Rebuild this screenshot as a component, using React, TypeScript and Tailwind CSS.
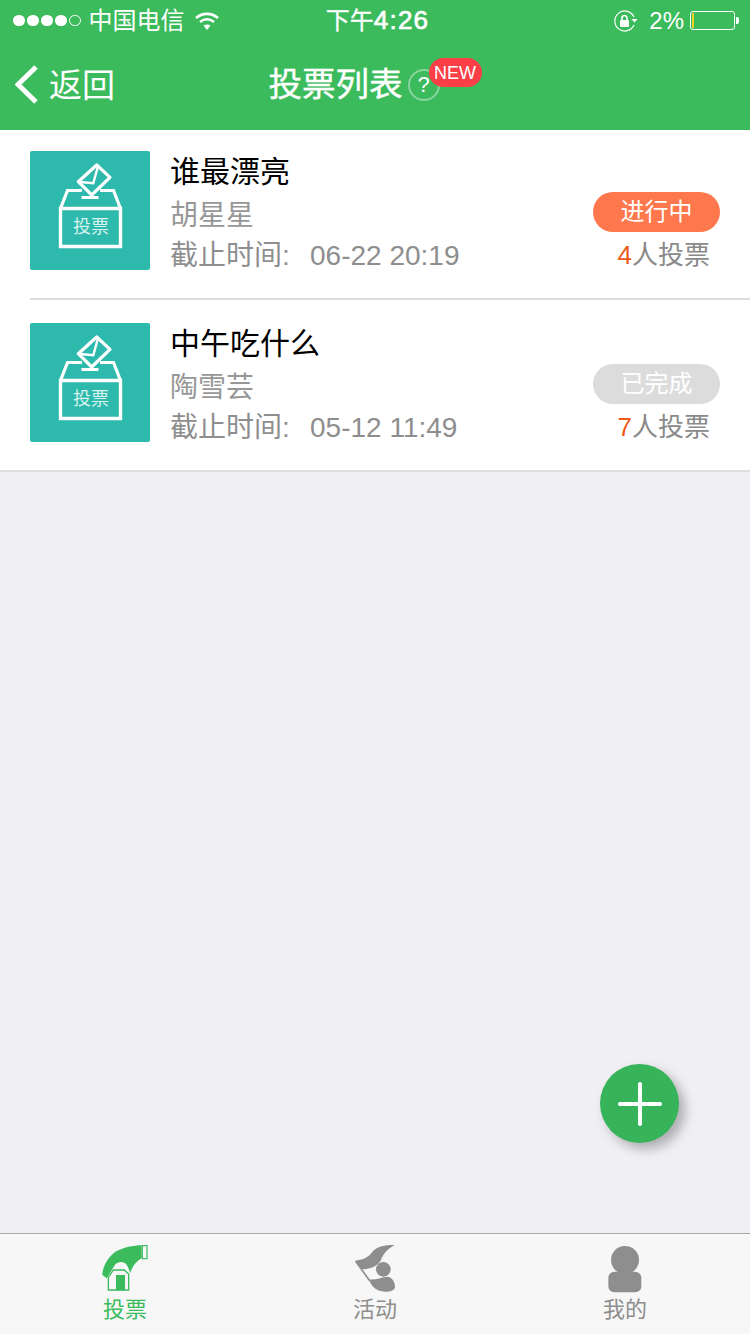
const FONT = "font-['Liberation_Sans','Noto_Sans_CJK_SC',sans-serif]";

function BallotIcon() {
  return (
    <div className="w-[120px] h-[119px] shrink-0 bg-[#2DB9AB] rounded-[2px]">
      <svg width="120" height="119" viewBox="0 0 120 119" fill="none" stroke="#fff">
        <path d="M30.5 57.5V95.5H90.5V57.5Z" strokeWidth="3.4" />
        <path d="M30.5 57.5L37.5 39.5H52M70 39.5H83.5L90.5 57.5" strokeWidth="3.2" />
        <path d="M51.5 46.5H68.5" strokeWidth="3" />
        <path d="M66.7 14L80 26.3L61.7 44L48.3 30.7Z" strokeWidth="3.2" strokeLinejoin="round" />
        <path d="M50 31L63.3 32.3L67.7 16.3" strokeWidth="2.4" />
        <text x="61" y="82" textAnchor="middle" fill="#D8F3F0" stroke="none" fontSize="18" fontFamily="'Noto Sans CJK SC',sans-serif">投票</text>
      </svg>
    </div>
  );
}

function Row({ title, name, date, status, count, statusClass, rowClass, lineClass }: { title: string; name: string; date: string; status: string; count: string; statusClass: string; rowClass: string; lineClass: string }) {
  return (
    <div className={`flex ${rowClass}`}>
      <div className={`flex flex-1 pr-[30px] ${lineClass}`}>
        <BallotIcon />
        <div className="ml-[20px] flex-1 flex flex-col">
          <div className="h-[42px] leading-[42px] text-[30px] text-black">{title}</div>
          <div className="mt-[2px] h-[42px] leading-[42px] text-[28px] text-[#979797]">{name}</div>
          <div className="h-[38px] leading-[38px] text-[28px] text-[#8E8E8E] whitespace-nowrap flex">
            <span>截止时间</span>
            <span className="w-[28px]">:</span>
            <span>{date}</span>
          </div>
        </div>
        <div className="flex flex-col items-end pt-[41px]">
          <div className={`w-[127px] h-[40px] rounded-full flex items-center justify-center text-[24px] text-white ${statusClass}`}>{status}</div>
          <div className="mt-[2px] mr-[10px] h-[42px] leading-[42px] text-[26px] text-[#8A8A8A] whitespace-nowrap">
            <span className="text-[#EE5A1C]">{count}</span>人投票
          </div>
        </div>
      </div>
    </div>
  );
}

function Tab({ label, active, children }: { label: string; active?: boolean; children: React.ReactNode }) {
  return (
    <div className={`flex-1 flex flex-col items-center pt-[6px] ${active ? "text-[#3BBB5C]" : "text-[#8E8E8E]"}`}>
      <div className="h-[55px] flex items-start">{children}</div>
      <div className="text-[22px] leading-[30px]">{label}</div>
    </div>
  );
}

export default function App() {
  return (
    <div className={`relative w-[750px] h-[1334px] overflow-hidden flex flex-col bg-[#EFEFF4] ${FONT}`}>
      <header className="relative z-10 h-[130px] shrink-0 bg-[#3BBB5C] text-white flex flex-col">
        <div className="h-[40px] grid grid-cols-3 items-center pl-[13px] pr-[11px]">
          <div className="flex items-center whitespace-nowrap">
            <div className="flex gap-[2.5px] items-center">
              <span className="w-[11.5px] h-[11.5px] rounded-full bg-white" />
              <span className="w-[11.5px] h-[11.5px] rounded-full bg-white" />
              <span className="w-[11.5px] h-[11.5px] rounded-full bg-white" />
              <span className="w-[11.5px] h-[11.5px] rounded-full bg-white" />
              <span className="w-[11.5px] h-[11.5px] rounded-full border border-white" />
            </div>
            <span className="ml-[8px] text-[24px] leading-[40px] pt-[1px]">中国电信</span>
            <svg className="ml-[9px]" width="26" height="20" viewBox="0 0 26 20" fill="none" stroke="#fff" strokeWidth="2.6">
              <path d="M2 7C8.5 1.5 17.5 1.5 24 7" />
              <path d="M6 11C10.5 7.5 15.5 7.5 20 11" />
              <path d="M13 19L9.5 14.5C11.5 13 14.5 13 16.5 14.5Z" fill="#fff" stroke="none" />
            </svg>
          </div>
          <div className="flex justify-center items-baseline whitespace-nowrap">
            <span className="text-[24px] ml-[3px] [-webkit-text-stroke:0.3px_white]">下午</span>
            <span className="text-[26px] tracking-[1.2px] [-webkit-text-stroke:0.7px_white]">4:26</span>
          </div>
          <div className="flex items-center justify-end whitespace-nowrap">
            <svg className="mr-[-2px]" width="24" height="22" viewBox="0 0 24 22" fill="none" stroke="#fff">
              <path d="M20 15A10 10 0 1 1 20 7" strokeWidth="1.2" />
              <path d="M17.5 9H23.5L20.5 12.5Z" fill="#fff" stroke="none" />
              <rect x="6" y="10" width="9" height="7" rx="1" fill="#fff" stroke="none" />
              <path d="M8 10V8A2.5 2.5 0 0 1 13 8V10" strokeWidth="1.6" />
            </svg>
            <span className="ml-[13px] text-[24px] leading-[40px] pt-[1px]">2%</span>
            <div className="ml-[6px] w-[45px] h-[19px] border border-white rounded-[3px] flex items-center pl-[1px]">
              <span className="w-[1.5px] h-[15px] bg-[#F0D020]" />
            </div>
            <span className="ml-[1px] w-[3px] h-[7px] bg-white rounded-r-[2px]" />
          </div>
        </div>
        <div className="relative flex-1 flex items-center justify-center">
          <div className="absolute left-[15px] top-[7px] h-[76px] flex items-center">
            <svg width="24" height="40" viewBox="0 0 24 40" fill="none" stroke="#fff" strokeWidth="5">
              <path d="M21 2L3 19.5L21 37" />
            </svg>
            <span className="ml-[10px] text-[33px] leading-none">返回</span>
          </div>
          <div className="flex items-center">
            <span className="text-[33.5px] leading-none [-webkit-text-stroke:0.4px_white]">投票列表</span>
            <span className="ml-[5px] w-[32px] h-[32px] rounded-full border-2 border-white/40 flex items-center justify-center text-[22px] leading-none">?</span>
            <span className="ml-[-11px] mt-[-25px] w-[53px] h-[29px] rounded-full bg-[#FC3E47] flex items-center justify-center text-[18px] leading-none">NEW</span>
          </div>
        </div>
      </header>

      <main className="flex-1 flex flex-col">
        <div className="bg-white">
          <Row rowClass="pl-[30px] pt-[21px] h-[170px]" lineClass="border-b-2 border-[#DEDEDE]" title="谁最漂亮" name="胡星星" date="06-22 20:19" status="进行中" count="4" statusClass="bg-[#FF774C]" />
          <Row rowClass="pl-[30px] pt-[23px] h-[172px] border-b-2 border-[#DEDEDE]" lineClass="" title="中午吃什么" name="陶雪芸" date="05-12 11:49" status="已完成" count="7" statusClass="bg-[#DCDCDC]" />
        </div>
      </main>

      <button className="absolute left-[600px] top-[1064px] w-[79px] h-[79px] rounded-full bg-[#37B35A] shadow-[6px_6px_12px_rgba(0,0,0,0.28)] flex items-center justify-center">
        <svg width="44" height="44" viewBox="0 0 44 44" stroke="#fff" strokeWidth="4" strokeLinecap="round">
          <path d="M22 2V42M2 22H42" />
        </svg>
      </button>

      <nav className="h-[101px] shrink-0 bg-[#F7F7F7] border-t border-[#A8A8A8] flex">
        <Tab label="投票" active>
          <svg width="50" height="53.3" viewBox="15 0 150 160">
            <path d="M40 150V112L55 90H88L101 102V150Z" fill="#F7F7F7" stroke="#3BBB5C" strokeWidth="4" />
            <rect x="63" y="105" width="27" height="46" fill="#3BBB5C" />
            <path d="M140 16V55C125 62 112 80 105 100C102 85 96 72 88 68C78 64 68 66 60 74L35 115L22 105C22 85 35 55 60 36C85 22 115 16 140 16Z" fill="#3BBB5C" />
            <rect x="142" y="17" width="14" height="39" fill="none" stroke="#3BBB5C" strokeWidth="3.5" />
          </svg>
        </Tab>
        <Tab label="活动">
          <svg width="50" height="53.3" viewBox="15 0 150 160">
            <path d="M150 15C125 14 100 18 85 32C75 45 65 58 30 62L50 88C75 88 100 78 108 60C115 40 130 25 150 15Z" fill="#8E8E8E" />
            <path d="M32 64L74 122" stroke="#8E8E8E" strokeWidth="5" />
            <circle cx="115" cy="88" r="22" fill="#8E8E8E" />
            <path d="M72 118C90 122 105 112 125 110C140 110 150 125 150 140C150 152 135 155 120 155C95 155 78 140 72 118Z" fill="#8E8E8E" />
          </svg>
        </Tab>
        <Tab label="我的">
          <svg width="50" height="53.3" viewBox="60 30 150 160">
            <circle cx="135" cy="90" r="42" fill="#8E8E8E" />
            <rect x="85" y="125" width="99" height="62" rx="18" fill="#8E8E8E" />
          </svg>
        </Tab>
      </nav>
    </div>
  );
}
